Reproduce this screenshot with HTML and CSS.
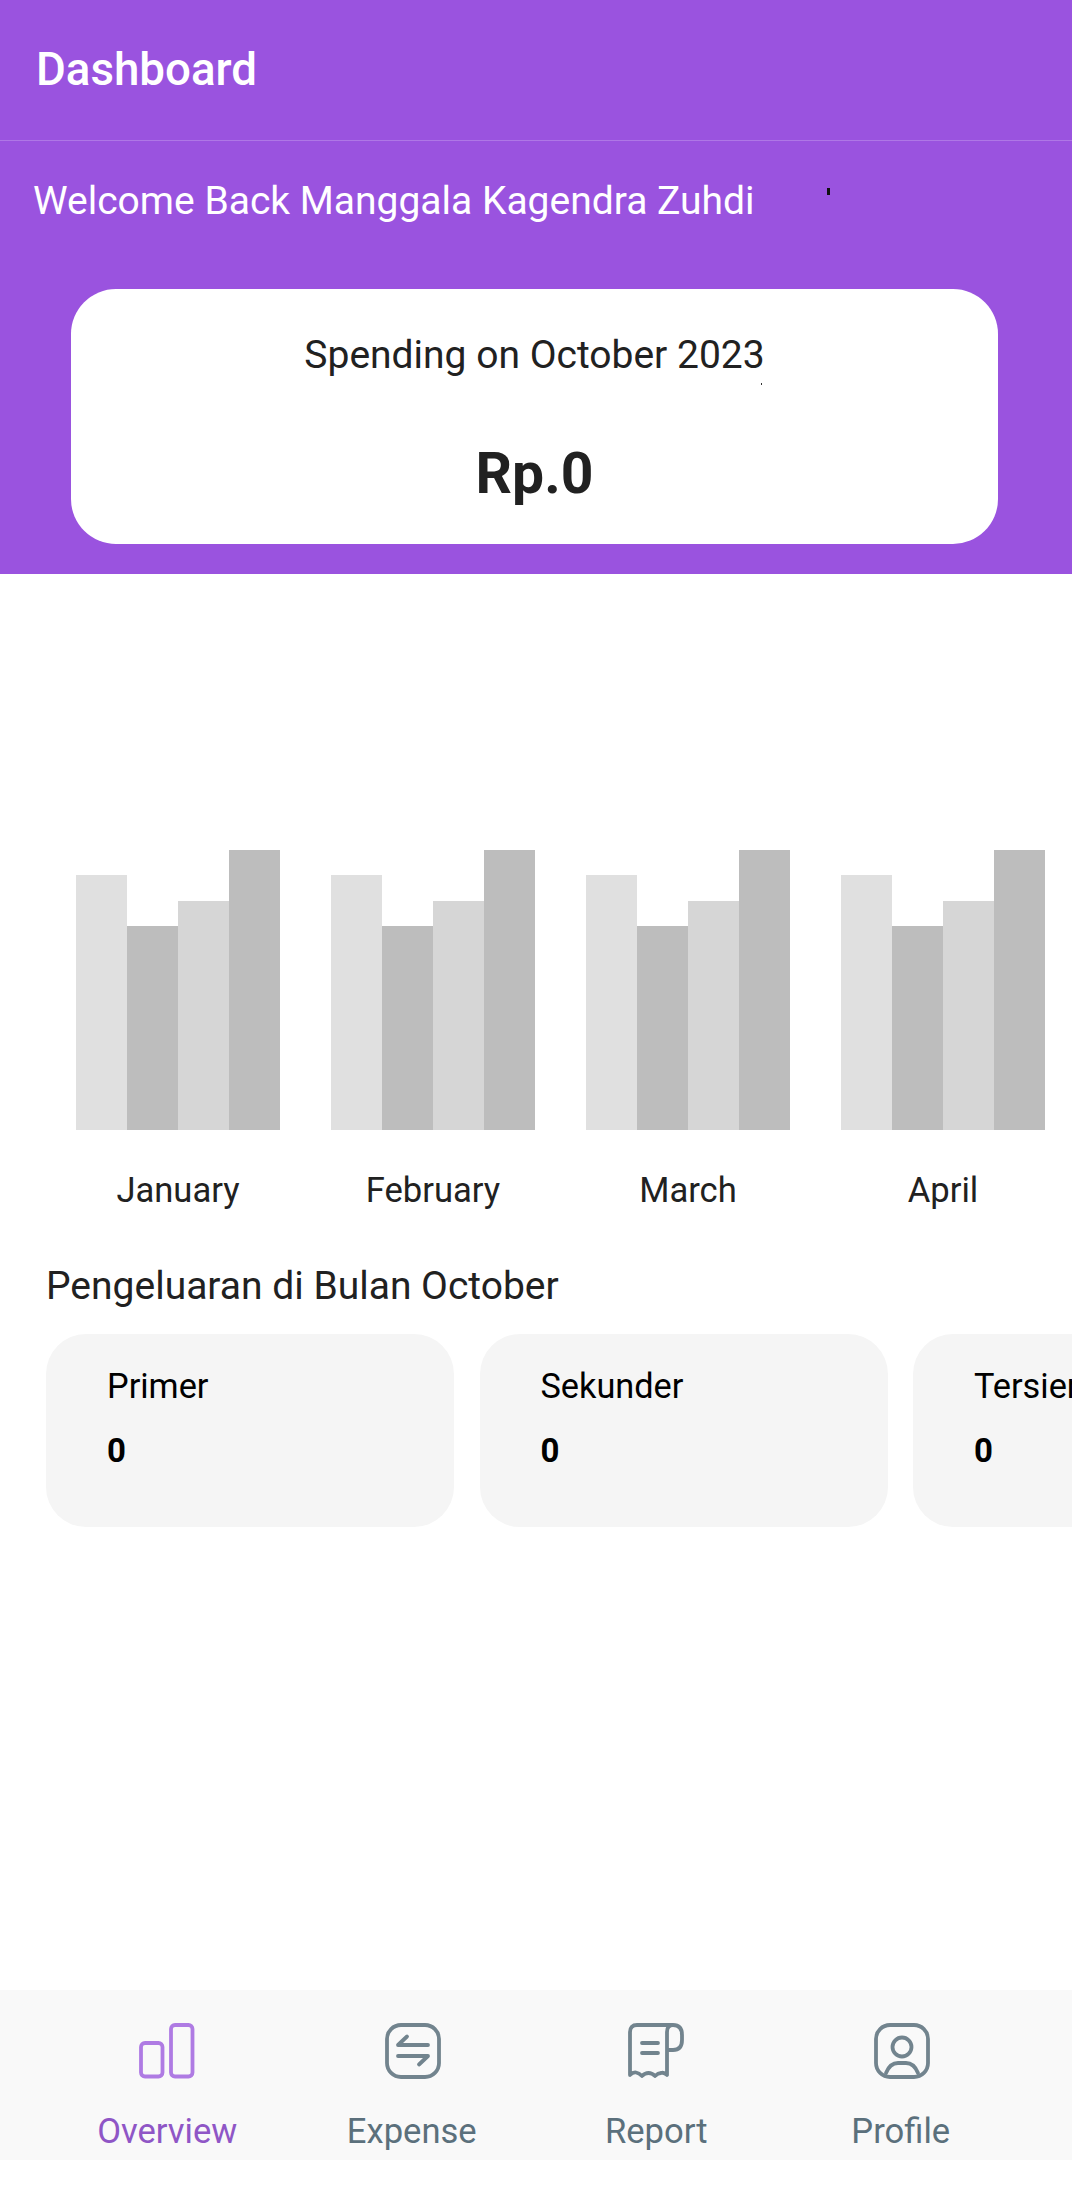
FILE: index.html
```html
<!DOCTYPE html>
<html lang="en">
<head>
<meta charset="utf-8">
<title>Dashboard</title>
<link rel="stylesheet" href="styles.css">
</head>
<body>
<div class="app">
  <header class="hero">
    <div class="appbar"><h1 class="appbar-title">Dashboard</h1></div>
    <div class="welcome-row">
      <p class="welcome">Welcome Back Manggala Kagendra Zuhdi</p>
      <span class="tick"></span>
    </div>
    <section class="spend-card">
      <p class="spend-label">Spending on October 2023</p>
      <span class="speck"></span>
      <p class="spend-value">Rp.0</p>
    </section>
  </header>

  <main class="content">
    <div class="chart">
      <div class="month">
        <div class="bars"><i class="bar b1"></i><i class="bar b2"></i><i class="bar b3"></i><i class="bar b4"></i></div>
        <span class="month-label">January</span>
      </div>
      <div class="month">
        <div class="bars"><i class="bar b1"></i><i class="bar b2"></i><i class="bar b3"></i><i class="bar b4"></i></div>
        <span class="month-label">February</span>
      </div>
      <div class="month">
        <div class="bars"><i class="bar b1"></i><i class="bar b2"></i><i class="bar b3"></i><i class="bar b4"></i></div>
        <span class="month-label">March</span>
      </div>
      <div class="month">
        <div class="bars"><i class="bar b1"></i><i class="bar b2"></i><i class="bar b3"></i><i class="bar b4"></i></div>
        <span class="month-label">April</span>
      </div>
    </div>

    <h2 class="section-title">Pengeluaran di Bulan October</h2>
    <div class="cats">
      <article class="cat"><p class="cat-name">Primer</p><p class="cat-value">0</p></article>
      <article class="cat"><p class="cat-name">Sekunder</p><p class="cat-value">0</p></article>
      <article class="cat"><p class="cat-name">Tersier</p><p class="cat-value">0</p></article>
    </div>
  </main>

  <nav class="tabbar">
    <a class="tab tab-active">
      <svg class="tab-icon" viewBox="0 0 56 56" fill="none" stroke="currentColor" stroke-width="3.8" stroke-linejoin="round">
        <rect x="2" y="20" width="21.5" height="33.5" rx="4"/>
        <rect x="32" y="2" width="21.5" height="51.5" rx="4"/>
      </svg>
      <span class="tab-label">Overview</span>
    </a>
    <a class="tab tab-shift-wide">
      <svg class="tab-icon" viewBox="0 0 56 56" fill="none" stroke="currentColor" stroke-width="3.8" stroke-linecap="round" stroke-linejoin="round">
        <rect x="2" y="2" width="52" height="52" rx="14"/>
        <path d="M43 22H13L22 13.5"/>
        <path d="M13 33H43L34 41.5"/>
      </svg>
      <span class="tab-label">Expense</span>
    </a>
    <a class="tab">
      <svg class="tab-icon" viewBox="0 0 56 56" fill="none" stroke="currentColor" stroke-width="3.8" stroke-linecap="round" stroke-linejoin="round">
        <path d="M45 2H9Q2 2 2 9V52Q5 49 8 49.500Q11 50 14 53Q17 50 20.500 50Q24 50 27 53Q30 50 33 50Q36 49 39 52V9Q39 2 45 2Q54 2 54 12V17Q54 27 45 27H39"/>
        <path d="M14 20H30M14 30H30"/>
      </svg>
      <span class="tab-label">Report</span>
    </a>
    <a class="tab tab-shift-wide">
      <svg class="tab-icon" viewBox="0 0 56 56" fill="none" stroke="currentColor" stroke-width="3.8" stroke-linecap="round" stroke-linejoin="round">
        <rect x="2" y="2" width="52" height="52" rx="14"/>
        <circle cx="28" cy="24" r="9.500"/>
        <path d="M12 50Q16 40 24 40H32Q40 40 44 50"/>
      </svg>
      <span class="tab-label">Profile</span>
    </a>
  </nav>
</div>
</body>
</html>
```
FILE: styles.css
```css
* { box-sizing: border-box; }
html, body { margin: 0; padding: 0; background: #fff; }
body { font-family: Roboto, "Noto Sans", sans-serif; color: #212121; }
h1, h2, p { margin: 0; font-weight: 400; }

.app {
  width: 1072px;
  height: 2188px;
  display: flex;
  flex-direction: column;
  overflow: hidden;
}

/* Purple header */
.hero {
  height: 574px;
  background: #9a53df;
  color: #fff;
  flex: none;
}
.appbar {
  height: 141px;
  padding-left: 36px;
  display: flex;
  align-items: center;
  border-bottom: 1px solid #af77e6;
}
.appbar-title { font-size: 45.7px; font-weight: 500; line-height: 1; }
.welcome-row {
  position: relative;
  height: 148px;
  padding: 37px 0 0 33px;
}
.welcome { font-size: 39px; line-height: 46px; }
.tick {
  position: absolute;
  left: 827px;
  top: 47px;
  width: 3px;
  height: 7px;
  background: #111;
}
.spend-card {
  position: relative;
  width: 927px;
  height: 255px;
  margin-left: 71px;
  background: #fff;
  border-radius: 45px;
  color: #212121;
  text-align: center;
}
.spend-label { padding-top: 43px; font-size: 39px; line-height: 46px; }
.speck {
  position: absolute;
  left: 690px;
  top: 94px;
  width: 1px;
  height: 2px;
  background: #333;
}
.spend-value { margin-top: 63px; font-size: 57px; font-weight: 700; line-height: 66px; }

/* Chart */
.content { flex: 1; min-height: 0; }
.chart {
  display: flex;
  gap: 51px;
  padding: 276px 0 0 76px;
  width: 1300px;
}
.month { width: 204px; display: flex; flex-direction: column; align-items: center; flex: none; }
.bars { width: 204px; height: 280px; display: flex; align-items: flex-end; }
.bar { display: block; width: 51px; }
.b1 { height: 255px; background: #e0e0e0; }
.b2 { height: 204px; background: #bdbdbd; }
.b3 { height: 229px; background: #d6d6d6; }
.b4 { height: 280px; background: #bdbdbd; }
.month-label { margin-top: 39px; font-size: 34.6px; line-height: 42px; }

.section-title { margin: 52px 0 0 46px; font-size: 39px; line-height: 46px; }
.cats { display: flex; gap: 25.500px; padding: 25px 0 0 46px; width: 1400px; }
.cat {
  width: 408px;
  height: 193px;
  flex: none;
  background: #f5f5f5;
  border-radius: 40px;
  padding: 32px 0 0 61px;
  color: #000;
}
.cat-name { font-size: 34.3px; line-height: 40px; }
.cat-value { margin-top: 25px; font-size: 33px; font-weight: 700; line-height: 40px; }

/* Bottom nav */
.tabbar {
  flex: none;
  height: 170px;
  margin-bottom: 28px;
  padding: 0 45px;
  background: #f9f9f9;
  display: grid;
  grid-template-columns: repeat(4, 244.500px);
}
.tab {
  display: flex;
  flex-direction: column;
  align-items: center;
  padding-top: 33px;
  color: #5b707c;
}
.tab-active { color: #8f56c6; }
.tab-icon { width: 56px; height: 56px; opacity: .85; filter: blur(.5px); }
.tab-shift-wide .tab-icon { margin-left: 3px; }
.tab-label { margin-top: 31px; font-size: 34.6px; line-height: 42px; }
.tab:first-child .tab-icon { color: #a366e0; }
```
